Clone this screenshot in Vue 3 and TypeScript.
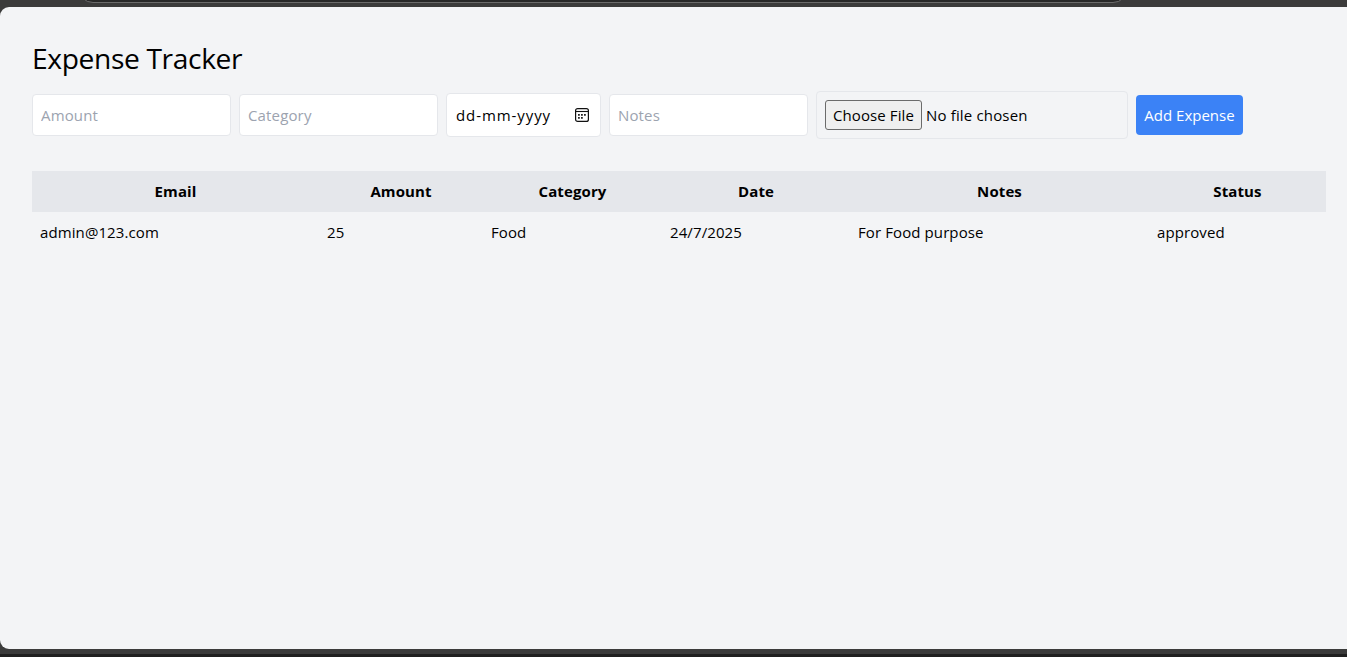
<script setup lang="ts">
interface Expense {
  email: string
  amount: number
  category: string
  date: string
  notes: string
  status: string
}

const headers: string[] = ['Email', 'Amount', 'Category', 'Date', 'Notes', 'Status']

const expenses: Expense[] = [
  { email: 'admin@123.com', amount: 25, category: 'Food', date: '24/7/2025', notes: 'For Food purpose', status: 'approved' },
]
</script>

<template>
  <div class="window">
    <div class="chrome"><div class="address"></div></div>
    <main class="page">
      <h1>Expense Tracker</h1>
      <form class="form" @submit.prevent>
        <input class="field" type="text" placeholder="Amount" />
        <input class="field" type="text" placeholder="Category" />
        <div class="date">
          <span class="date-text">dd-mm-yyyy</span>
          <svg width="16" height="16" viewBox="0 0 16 16" fill="none">
            <rect x="1.6" y="1.6" width="12.8" height="12.8" rx="2" stroke="#111" stroke-width="1.2" />
            <path d="M1.5 4.5H14.5" stroke="#111" stroke-width="1.1" />
            <path d="M4 7h1.8v1.8H4zM7 7h1.8v1.8H7zM10 7h1.8v1.8H10zM4 10h1.8v1.8H4zM7 10h1.8v1.8H7z" fill="#222" />
          </svg>
        </div>
        <input class="field" type="text" placeholder="Notes" />
        <div class="file">
          <button type="button" class="choose">Choose File</button>
          <span class="file-text">No file chosen</span>
        </div>
        <button type="submit" class="add">Add Expense</button>
      </form>
      <table>
        <colgroup>
          <col class="c-email" /><col class="c-amount" /><col class="c-category" />
          <col class="c-date" /><col class="c-notes" /><col class="c-status" />
        </colgroup>
        <thead>
          <tr><th v-for="h in headers" :key="h">{{ h }}</th></tr>
        </thead>
        <tbody>
          <tr v-for="e in expenses" :key="e.email">
            <td>{{ e.email }}</td>
            <td>{{ e.amount }}</td>
            <td>{{ e.category }}</td>
            <td>{{ e.date }}</td>
            <td>{{ e.notes }}</td>
            <td>{{ e.status }}</td>
          </tr>
        </tbody>
      </table>
    </main>
    <div class="taskbar"></div>
  </div>
</template>

<style>
body {
  margin: 0;
  overflow: hidden;
}
</style>

<style scoped>
* {
  box-sizing: border-box;
}
.window {
  height: 657px;
  display: flex;
  flex-direction: column;
  background: #3b3b3b;
  font-family: "Segoe UI", "Open Sans", "Noto Sans", sans-serif;
  font-size: 15px;
  letter-spacing: 0.1px;
  line-height: 24px;
  color: #000;
}
.chrome {
  height: 7px;
  flex: none;
  overflow: hidden;
}
.address {
  width: 1050px;
  height: 30px;
  margin: -27px 0 0 78px;
  border: 1px solid #6b6b6b;
  border-radius: 15px;
  background: #282828;
}
.page {
  height: 642px;
  flex: none;
  padding: 31px 21px 0 32px;
  background: #f3f4f6;
  border-radius: 9px 0 0 9px;
}
h1 {
  margin: 0 0 13px;
  height: 40px;
  line-height: 40px;
  font-size: 28.2px;
  font-weight: 400;
  letter-spacing: -0.37px;
  white-space: nowrap;
}
.form {
  display: flex;
  align-items: center;
  gap: 8px;
  height: 48px;
  margin: 0 0 32px;
}
.field {
  width: 199px;
  height: 42px;
  flex: none;
  padding: 8px;
  border: 1px solid #e5e7eb;
  border-radius: 4px;
  background: #fff;
  font: inherit;
  letter-spacing: 0.15px;
  outline: none;
}
.field::placeholder {
  color: #9ca3af;
  opacity: 1;
}
.date {
  width: 155px;
  height: 44px;
  flex: none;
  display: flex;
  align-items: center;
  justify-content: space-between;
  padding: 0 10px 0 9px;
  border: 1px solid #e5e7eb;
  border-radius: 4px;
  background: #fff;
  white-space: nowrap;
}
.date-text {
  letter-spacing: 0.92px;
}
.file {
  width: 312px;
  height: 48px;
  flex: none;
  display: flex;
  align-items: center;
  gap: 4px;
  padding: 0 8px;
  border: 1px solid #e5e7eb;
  border-radius: 4px;
  white-space: nowrap;
}
.file-text {
  letter-spacing: 0.16px;
}
.choose {
  width: 97px;
  height: 30px;
  padding: 0;
  border: 1px solid #6b6b6b;
  border-radius: 3px;
  background: #efefef;
  font: inherit;
  letter-spacing: 0.1px;
  color: #000;
  white-space: nowrap;
}
.add {
  width: 107px;
  height: 40px;
  flex: none;
  padding: 0;
  border: 0;
  border-radius: 4px;
  background: #3b82f6;
  color: #fff;
  font: inherit;
  letter-spacing: 0;
  white-space: nowrap;
}
table {
  width: 1294px;
  table-layout: fixed;
  border-collapse: collapse;
}
.c-email { width: 287px; }
.c-amount { width: 164px; }
.c-category { width: 179px; }
.c-date { width: 188px; }
.c-notes { width: 299px; }
.c-status { width: 177px; }
th, td {
  height: 41px;
  padding: 7px 8px 9px;
  white-space: nowrap;
}
th {
  background: #e5e7eb;
  font-weight: 700;
  text-align: center;
}
td {
  text-align: left;
}
.taskbar {
  height: 3px;
  margin-top: auto;
  background: #202020;
}
</style>
